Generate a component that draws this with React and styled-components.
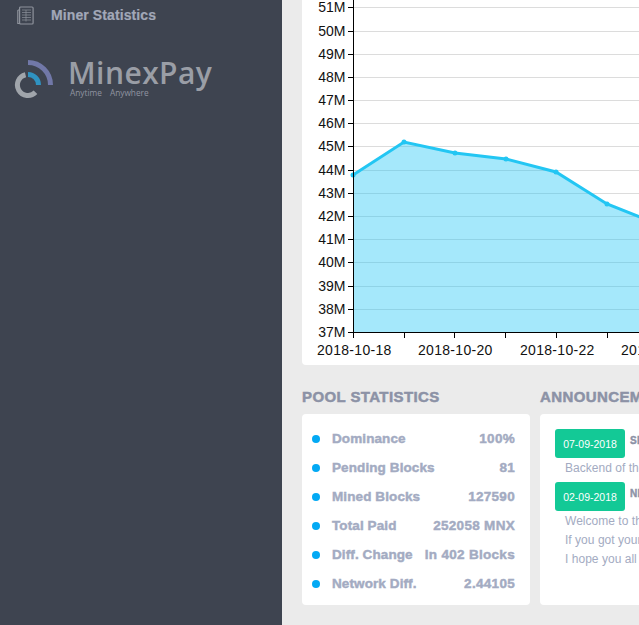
import React from 'react';
import styled, { createGlobalStyle } from 'styled-components';

const Global = createGlobalStyle`
  html, body { margin: 0; padding: 0; width: 639px; height: 625px; overflow: hidden; background: #ebebeb; }
  * { box-sizing: border-box; }
`;
const Page = styled.div`
  display: flex; width: 639px; height: 625px; overflow: hidden;
  font-family: "Liberation Sans", Arial, sans-serif;
`;
const Sidebar = styled.aside`
  flex: 0 0 282px; background: #3e4450; display: flex; flex-direction: column;
`;
const MenuItem = styled.div`
  height: 30px; display: flex; align-items: center; padding-left: 17px; gap: 17px;
  color: #a2a8b8; font-size: 14px; font-weight: 700; letter-spacing: 0.1px;
  -webkit-text-stroke: 0.2px #a2a8b8;
`;
const Logo = styled.div`
  display: flex; align-items: flex-start; gap: 14px; padding: 27px 0 0 14px;
`;
const LogoText = styled.div`
  display: flex; flex-direction: column; color: #9a9ea6;
`;
const LogoName = styled.div`
  font-family: "Open Sans", "Noto Sans", sans-serif; font-size: 30px; line-height: 34px; letter-spacing: 0.45px; font-weight: 600;
  margin-top: -1px;
`;
const LogoTag = styled.div`
  display: flex; gap: 8px; font-family: "Open Sans", sans-serif; font-size: 8.3px; line-height: 10px; color: #9094a0; margin-top: -2px; padding-left: 2px;
`;
const Main = styled.main`
  flex: 0 0 auto; width: 420px; padding: 0 20px; display: flex; flex-direction: column;
`;
const ChartCard = styled.section`
  background: #fff; height: 365px; border-radius: 0 0 4px 4px; overflow: hidden; flex: none;
`;
const Row = styled.div`
  display: flex; gap: 10px; margin-top: 22px;
`;
const Column = styled.div`
  flex: 0 0 ${p => p.$w}px; display: flex; flex-direction: column;
`;
const Title = styled.h3`
  margin: 0 0 7px; font-size: 15px; line-height: 20px; font-weight: 700; color: #8c92a6; white-space: nowrap; letter-spacing: 0.4px;
  -webkit-text-stroke: 0.5px #8c92a6;
`;
const Card = styled.div`
  background: #fff; border-radius: 4px; height: 191px;
`;
const StatsCard = styled(Card)`
  padding: 10px 15px 0 10px;
`;
const Stat = styled.div`
  height: 29px; display: flex; align-items: center; color: #a3abc2; font-size: 13.5px; font-weight: 700; letter-spacing: 0.1px;
  -webkit-text-stroke: 0.45px #a3abc2;
`;
const Dot = styled.span`
  width: 8px; height: 8px; border-radius: 50%; background: #03a9f4; margin-right: 12px; flex: none;
`;
const StatValue = styled.span`
  margin-left: auto; letter-spacing: 0.3px;
`;
const NewsCard = styled(Card)`
  padding: 15px 15px; overflow: hidden;
`;
const NewsHead = styled.div`
  display: flex; gap: 5px; height: 29px;
`;
const DateBadge = styled.span`
  width: 70px; height: 29px; background: #13c996; color: #fff; border-radius: 3px;
  display: flex; align-items: center; justify-content: center; font-size: 10.5px; padding-top: 1px; flex: none;
`;
const NewsTitle = styled.span`
  font-size: 10px; font-weight: 700; color: #8c92a6; white-space: nowrap; line-height: 24px; letter-spacing: 0.3px; -webkit-text-stroke: 0.4px #8c92a6;
`;
const NewsLine = styled.div`
  font-size: 12px; line-height: 19px; color: #a3abc2; white-space: nowrap; padding-left: 10px; letter-spacing: 0.03px;
`;
const NewsBody = styled.div`
  padding-top: 1px;
  margin-bottom: ${p => p.$tight ? '0' : '4px'};
`;

const ys = [7,31,54,77,100,123,146,170,193,216,239,262,286,309,332];
const labels = ['51M','50M','49M','48M','47M','46M','45M','44M','43M','42M','41M','40M','39M','38M','37M'];
const pts = [[353,175],[404,142],[455,153],[506,159],[556,172],[607,204],[658,224]];
const ticks = [353.5,404.5,454.5,505.5,556.5,607.5];
const xlabels = [[317,'2018-10-18'],[418,'2018-10-20'],[520,'2018-10-22'],[621,'2018-10-24']];
const line = pts.map(p => p.join(',')).join(' ');

const Chart = () => (
  <svg width="400" height="365" viewBox="302 0 400 365" style={{ display: 'block' }} fontFamily='"Liberation Sans", Arial, sans-serif'>
    {ys.slice(0, -1).map(y => <line key={y} x1="353" x2="702" y1={y + 0.5} y2={y + 0.5} stroke="#dcdcdc" strokeWidth="1" />)}
    <polygon points={`${line} 658,332 353,332`} fill="#1ec5f4" fillOpacity="0.4" />
    <polyline points={line} fill="none" stroke="#23c6f3" strokeWidth="3" />
    {pts.map(p => <circle key={p[0]} cx={p[0]} cy={p[1]} r="2.5" fill="#23c6f3" />)}
    <path d="M353.5 0V332.5H702" fill="none" stroke="#000" strokeWidth="1" />
    {ys.map(y => <line key={y} x1="348" x2="353" y1={y + 0.5} y2={y + 0.5} stroke="#000" />)}
    {ticks.map(x => <line key={x} x1={x} x2={x} y1="332" y2="338" stroke="#000" />)}
    {labels.map((l, i) => <text key={l} x="345.5" y={ys[i] + 5} textAnchor="end" fontSize="14" fill="#111">{l}</text>)}
    {xlabels.map(([x, t]) => <text key={t} x={x} y="355" fontSize="14" letterSpacing="0.3" fill="#111">{t}</text>)}
  </svg>
);

const MenuIcon = () => (
  <svg width="17" height="19" viewBox="0 0 17 19" fill="none" stroke="#8d929b" strokeWidth="1.2">
    <path d="M2.6 3.5L0.8 4.5V17.5H3" />
    <rect x="2.6" y="1" width="13.5" height="17" rx="1" />
    <path d="M5 4H14M5 6.5H14M5 9H14M5 11.5H14M5 14H14M9 4V15.5" strokeWidth="1" opacity=".7" />
  </svg>
);

const LogoMark = () => (
  <svg width="40" height="42" viewBox="0 0 40 42" fill="none">
    <path d="M14 5.5 A 22.5 22.5 0 0 1 36.5 28" stroke="#7178a8" strokeWidth="5" />
    <path d="M14 17.5 A 10.5 10.5 0 0 1 24.5 28" stroke="#2f93c2" strokeWidth="5" />
    <path d="M11.5 17.8 A 10.5 10.5 0 1 0 21.5 35.3" stroke="#a0a5ab" strokeWidth="5" />
  </svg>
);

const stats = [
  ['Dominance', '100%'], ['Pending Blocks', '81'], ['Mined Blocks', '127590'],
  ['Total Paid', '252058 MNX'], ['Diff. Change', 'In 402 Blocks'], ['Network Diff.', '2.44105'],
];

export default function App() {
  return (
    <Page>
      <Global />
      <Sidebar>
        <MenuItem><MenuIcon />Miner Statistics</MenuItem>
        <Logo>
          <LogoMark />
          <LogoText>
            <LogoName>MinexPay</LogoName>
            <LogoTag><span>Anytime</span><span>Anywhere</span></LogoTag>
          </LogoText>
        </Logo>
      </Sidebar>
      <Main>
        <ChartCard><Chart /></ChartCard>
        <Row>
          <Column $w={228}>
            <Title>POOL STATISTICS</Title>
            <StatsCard>
              {stats.map(([k, v]) => (
                <Stat key={k}><Dot />{k}<StatValue>{v}</StatValue></Stat>
              ))}
            </StatsCard>
          </Column>
          <Column $w={300}>
            <Title>ANNOUNCEMENTS</Title>
            <NewsCard>
              <NewsHead><DateBadge>07-09-2018</DateBadge><NewsTitle>SERVER UPDATE</NewsTitle></NewsHead>
              <NewsBody><NewsLine>Backend of the pool was updated</NewsLine></NewsBody>
              <NewsHead><DateBadge>02-09-2018</DateBadge><NewsTitle>NEW POOL</NewsTitle></NewsHead>
              <NewsBody $tight>
                <NewsLine>Welcome to the new pool</NewsLine>
                <NewsLine>If you got your payout already</NewsLine>
                <NewsLine>I hope you all enjoy mining</NewsLine>
              </NewsBody>
            </NewsCard>
          </Column>
        </Row>
      </Main>
    </Page>
  );
}
